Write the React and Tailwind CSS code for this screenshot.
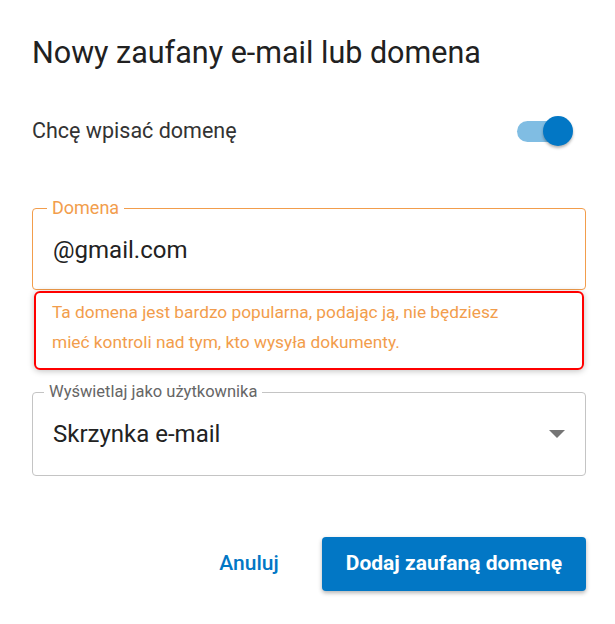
import React, { useState } from 'react';

const App = () => {
  const [domainMode, setDomainMode] = useState(true);

  return (
    <div className="w-[615px] h-[624px] bg-white font-['Roboto',sans-serif] pl-8 pr-[29px] pt-[33px]">
      <h2 className="text-[30.5px] leading-[40px] text-[#212121]">Nowy zaufany e-mail lub domena</h2>

      <div className="mt-[43px] flex items-center justify-between h-[30px]">
        <span className="text-[21.5px] text-[#333333]">Chcę wpisać domenę</span>
        <button
          type="button"
          onClick={() => setDomainMode(!domainMode)}
          className="relative w-[56px] h-[32px] mr-[13px] flex items-center"
        >
          <span className="block w-[48px] h-[21px] rounded-full bg-[#80bde3]" />
          <span className="absolute right-0 top-[1px] w-[30px] h-[30px] rounded-full bg-[#0277c5] shadow-[0_2px_3px_rgba(0,0,0,0.3)]" />
        </button>
      </div>

      <fieldset className="mt-[52px] border border-[#f29d4c] rounded-[4px] px-[20px]">
        <legend className="ml-[-6px] px-[5px] text-[18px] leading-[20px] text-[#f29d4c]">Domena</legend>
        <div className="pt-[20px] pb-[27px] text-[24px] leading-[24px] text-[#222222]">@gmail.com</div>
      </fieldset>

      <div className="mx-[2px] mt-[1px] border-2 border-[#ff0000] rounded-[6px] shadow-[0_1px_6px_rgba(0,0,0,0.25)] pl-[16px] pr-[60px] pt-[4px] pb-[11px] text-[17.3px] leading-[30px] text-[#f29d4c]">
        Ta domena jest bardzo popularna, podając ją, nie będziesz mieć kontroli nad tym, kto wysyła dokumenty.
      </div>

      <fieldset className="mt-[12px] border border-[#c4c4c4] rounded-[4px] pl-[20px] pr-[20px]">
        <legend className="ml-[-9px] px-[5px] text-[16.5px] leading-[20px] text-[#666666]">Wyświetlaj jako użytkownika</legend>
        <div className="pt-[20px] pb-[29px] flex items-center justify-between">
          <span className="text-[24px] leading-[24px] text-[#222222]">Skrzynka e-mail</span>
          <span className="w-0 h-0 border-l-[8px] border-r-[8px] border-t-[8px] border-l-transparent border-r-transparent border-t-[#757575]" />
        </div>
      </fieldset>

      <div className="mt-[61px] flex items-center justify-end gap-[27px]">
        <button type="button" className="px-[16px] h-[54px] text-[21px] font-medium text-[#0277c5]">Anuluj</button>
        <button type="button" className="h-[54px] px-[24px] rounded-[4px] bg-[#0277c5] text-white text-[21px] font-bold shadow-[0_2px_4px_rgba(0,0,0,0.3)]">
          Dodaj zaufaną domenę
        </button>
      </div>
    </div>
  );
};

export default App;
